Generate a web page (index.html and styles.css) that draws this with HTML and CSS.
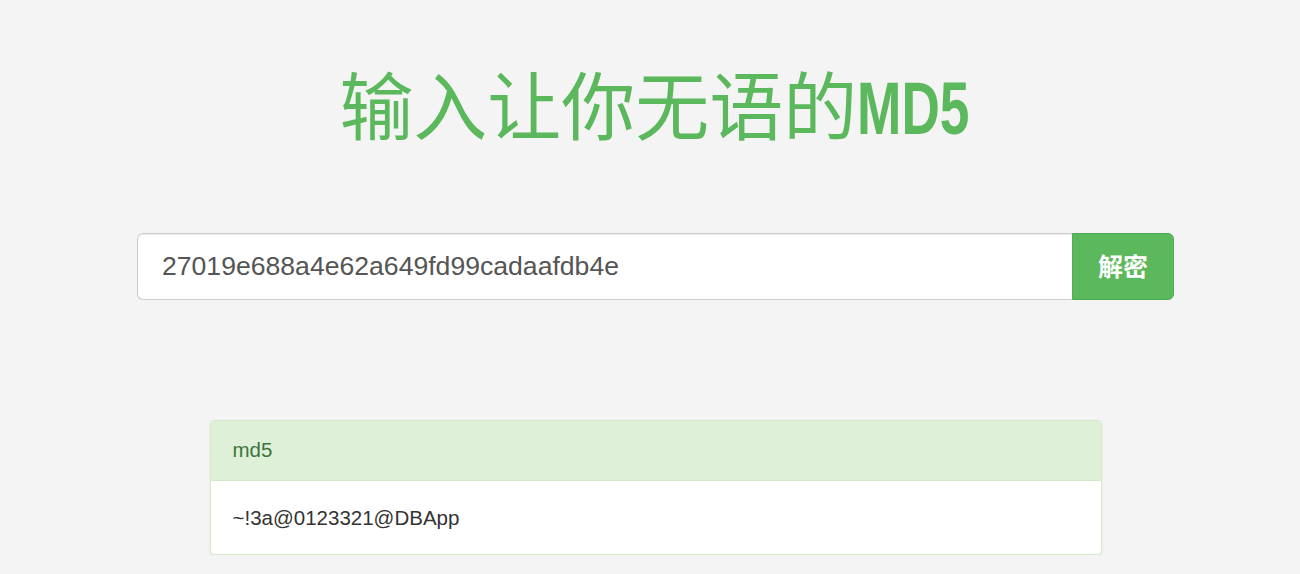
FILE: index.html
```html
<!DOCTYPE html>
<html lang="zh">
<head>
<meta charset="utf-8">
<title>输入让你无语的MD5</title>
<link rel="stylesheet" href="styles.css">
</head>
<body>
<div class="page">
  <h1 class="title">输入让你无语的<span class="title-md5">MD5</span></h1>
  <form class="search">
    <input class="search-input" type="text" value="27019e688a4e62a649fd99cadaafdb4e">
    <button class="search-btn" type="button">解密</button>
  </form>
  <div class="panel">
    <div class="panel-heading">md5</div>
    <div class="panel-body">~!3a@0123321@DBApp</div>
  </div>
</div>
</body>
</html>
```
FILE: styles.css
```css
html, body {
  margin: 0;
  padding: 0;
  background: #f4f4f4;
  overflow: hidden;
}
body {
  font-family: "Liberation Sans", Arial, "Noto Sans CJK SC", sans-serif;
  color: #333;
}
.page {
  padding-left: 11px;
  display: flex;
  flex-direction: column;
  align-items: center;
}
.title {
  margin: 65px 0 0;
  font-family: "Noto Sans CJK SC", serif;
  font-weight: 400;
  font-size: 74px;
  line-height: 74px;
  color: #5cb85c;
  white-space: nowrap;
}
.title-md5 {
  display: inline-block;
  font-family: "Liberation Sans", Arial, sans-serif;
  font-weight: 700;
  transform: scaleX(0.72);
  transform-origin: left center;
  margin-right: -42px;
}
.search {
  margin: 87px 0 0;
  display: flex;
  width: 1037px;
  height: 67px;
}
.search-input {
  flex: 1;
  box-sizing: border-box;
  height: 67px;
  margin: 0;
  padding: 0 24px;
  border: 1px solid #ccc;
  border-right: 0;
  border-radius: 6px 0 0 6px;
  background: #fff;
  font-family: "Liberation Sans", Arial, sans-serif;
  font-size: 26.6px;
  color: #555;
  box-shadow: inset 0 1px 1px rgba(0,0,0,0.075);
  outline: none;
}
.search-btn {
  width: 102px;
  height: 67px;
  margin: 0;
  border: 1px solid #4cae4c;
  border-radius: 0 6px 6px 0;
  background: #5cb85c;
  color: #fff;
  font-family: "Noto Sans CJK SC", sans-serif;
  font-weight: 700;
  font-size: 25px;
  padding: 0 0 4px;
}
.panel {
  margin-top: 120px;
  width: 892px;
  box-sizing: border-box;
  border: 1px solid #d6e9c6;
  border-radius: 4px;
  background: #fff;
  box-shadow: 0 1px 2px rgba(0,0,0,0.08);
  overflow: hidden;
}
.panel-heading {
  height: 60px;
  box-sizing: border-box;
  padding: 0 22px 2px;
  display: flex;
  align-items: center;
  background: #dff0d8;
  color: #3c763d;
  font-size: 20.5px;
  border-bottom: 1px solid #d6e9c6;
}
.panel-body {
  height: 73px;
  box-sizing: border-box;
  padding: 0 22px;
  display: flex;
  align-items: center;
  font-size: 20.5px;
  color: #333;
}
```
